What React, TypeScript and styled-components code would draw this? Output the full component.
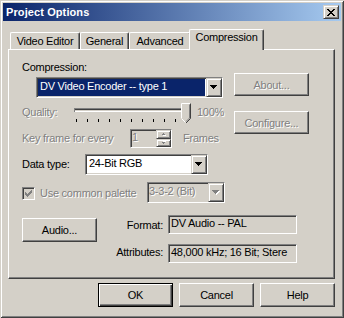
import React from 'react';
import styled, { createGlobalStyle, css } from 'styled-components';

const FACE = '#D4D0C8';
const SHADOW = '#808080';
const DARK = '#404040';
const SEL = '#0A246A';

const GlobalStyle = createGlobalStyle`
    html, body {
        margin: 0;
        padding: 0;
        background: ${FACE};
    }
    body {
        font-family: "Liberation Sans", Arial, sans-serif;
        font-size: 11px;
        letter-spacing: -0.25px;
        color: #000;
    }
    * {
        box-sizing: border-box;
    }
`;

const raised = css`
    border: 1px solid;
    border-color: #fff ${DARK} ${DARK} #fff;
    box-shadow: inset -1px -1px ${SHADOW};
`;

const raisedSmall = css`
    border: 1px solid;
    border-color: ${FACE} ${DARK} ${DARK} ${FACE};
    box-shadow: inset 1px 1px #fff, inset -1px -1px ${SHADOW};
`;

const sunken = css`
    border: 1px solid;
    border-color: ${SHADOW} #fff #fff ${SHADOW};
    box-shadow: inset 1px 1px ${DARK}, inset -1px -1px ${FACE};
`;

const greyed = css`
    color: ${SHADOW};
    text-shadow: 1px 1px 0 #fff;
`;

const Window = styled.div`
    width: 344px;
    height: 318px;
    padding: 3px;
    background: ${FACE};
    box-shadow: inset 1px 1px ${FACE}, inset -1px -1px ${DARK}, inset 2px 2px #fff, inset -2px -2px ${SHADOW};
    display: flex;
    flex-direction: column;
`;

const TitleBar = styled.div`
    height: 18px;
    display: flex;
    align-items: center;
    justify-content: space-between;
    padding: 0 2px 0 3px;
    background: linear-gradient(to right, ${SEL}, #a6caf0);
`;

const TitleText = styled.span`
    color: #fff;
    font-weight: bold;
    letter-spacing: 0.1px;
    line-height: 13px;
`;

const CaptionButton = styled.div`
    width: 16px;
    height: 14px;
    background: ${FACE};
    ${raisedSmall};
    display: flex;
    align-items: center;
    justify-content: center;
`;

const Body = styled.div`
    flex: 1;
    padding: 8px 0 0 5px;
`;

const TabStrip = styled.div`
    height: 20px;
    display: flex;
    align-items: flex-end;
    padding-left: 2px;
`;

const Tab = styled.div<{ $active?: boolean; $w: number }>`
    position: relative;
    z-index: ${(p) => (p.$active ? 2 : 1)};
    width: ${(p) => p.$w}px;
    height: ${(p) => (p.$active ? 21 : 17)}px;
    margin: ${(p) => (p.$active ? '0 -2px -1px -2px' : '0')};
    padding-top: ${(p) => (p.$active ? 1 : 2)}px;
    background: ${FACE};
    border-top: 1px solid #fff;
    border-left: 1px solid #fff;
    border-right: 1px solid ${DARK};
    border-radius: 2px 2px 0 0;
    box-shadow: inset -1px 0 ${SHADOW};
    text-align: center;
    line-height: 13px;
    white-space: nowrap;
`;

const Panel = styled.div`
    width: 327px;
    height: 230px;
    padding: 11px 0 0 13px;
    border: 1px solid;
    border-color: #fff ${DARK} ${DARK} #fff;
    box-shadow: inset -1px -1px ${SHADOW};
`;

const TopGrid = styled.div`
    display: grid;
    grid-template-columns: 212px 75px;
`;

const Column = styled.div`
    display: flex;
    flex-direction: column;
    align-items: flex-start;
`;

const Row = styled.div<{ $mt: number; $h: number }>`
    display: flex;
    align-items: flex-start;
    margin-top: ${(p) => p.$mt}px;
    height: ${(p) => p.$h}px;
`;

const Label = styled.div<{ $w?: number; $pt?: number; $ml?: number; $disabled?: boolean }>`
    ${(p) => p.$w && `width: ${p.$w}px; flex: none;`}
    padding-top: ${(p) => p.$pt ?? 0}px;
    margin-left: ${(p) => p.$ml ?? 0}px;
    line-height: 13px;
    white-space: nowrap;
    ${(p) => p.$disabled && greyed};
`;

const Combo = styled.div<{ $w: number; $ml?: number; $mt?: number; $disabled?: boolean }>`
    width: ${(p) => p.$w}px;
    height: 21px;
    margin-left: ${(p) => p.$ml ?? 0}px;
    margin-top: ${(p) => p.$mt ?? 0}px;
    flex: none;
    display: flex;
    background: ${(p) => (p.$disabled ? FACE : '#fff')};
    ${sunken};
`;

const ComboValue = styled.div<{ $selected?: boolean; $disabled?: boolean }>`
    flex: 1;
    margin: 1px;
    padding-left: ${(p) => (p.$disabled ? 0 : 2)}px;
    line-height: 15px;
    white-space: nowrap;
    overflow: hidden;
    ${(p) => p.$selected && `background: ${SEL}; color: #fff;`}
    ${(p) => p.$disabled && greyed};
`;

const DropButton = styled.div`
    width: 16px;
    flex: none;
    background: ${FACE};
    ${raisedSmall};
    display: flex;
    align-items: center;
    justify-content: center;
`;

const PushButton = styled.div<{ $h: number; $mt?: number; $default?: boolean; $disabled?: boolean }>`
    width: 75px;
    height: ${(p) => p.$h}px;
    margin-top: ${(p) => p.$mt ?? 0}px;
    flex: none;
    display: flex;
    align-items: center;
    justify-content: center;
    background: ${FACE};
    white-space: nowrap;
    ${(p) =>
        p.$default
            ? css`
                  border: 1px solid #000;
                  box-shadow: inset 1px 1px #fff, inset -1px -1px ${DARK}, inset -2px -2px ${SHADOW};
              `
            : raised};
    ${(p) => p.$disabled && greyed};
`;

const SpinBox = styled.div`
    width: 42px;
    height: 19px;
    flex: none;
    display: flex;
    background: ${FACE};
    ${sunken};
`;

const SpinValue = styled.div`
    flex: 1;
    padding: 1px 0 0 1px;
    line-height: 13px;
    ${greyed};
`;

const SpinButtons = styled.div`
    width: 15px;
    display: flex;
    flex-direction: column;
`;

const SpinButton = styled.div`
    flex: 1;
    background: ${FACE};
    ${raisedSmall};
    display: flex;
    align-items: center;
    justify-content: center;
`;

const CheckBox = styled.div`
    width: 13px;
    height: 13px;
    margin-top: 5px;
    flex: none;
    background: ${FACE};
    ${sunken};
    display: flex;
    align-items: center;
    justify-content: center;
`;

const BottomGrid = styled.div`
    display: grid;
    grid-template-columns: 75px 61px 129px;
    grid-template-rows: 19px 19px;
    column-gap: 5px;
    row-gap: 10px;
    margin-top: 12px;
`;

const AudioCell = styled.div`
    grid-column: 1;
    grid-row: 1 / span 2;
    padding-top: 3px;
`;

const FieldLabel = styled(Label)`
    text-align: right;
`;

const Field = styled.div`
    height: 19px;
    padding: 1px 0 0 2px;
    line-height: 13px;
    white-space: nowrap;
    overflow: hidden;
    background: ${FACE};
    ${sunken};
`;

const ButtonRow = styled.div`
    width: 327px;
    margin-top: 4px;
    display: flex;
    justify-content: flex-end;
    gap: 6px;
`;

const Arrow = ({ disabled }: { disabled?: boolean }) => (
    <svg width={8} height={5} viewBox="0 0 8 5" shapeRendering="crispEdges">
        {disabled && <path d="M1 1h7v1H1zM2 2h5v1H2zM3 3h3v1H3zM4 4h1v1H4z" fill="#fff" />}
        <path d="M0 0h7v1H0zM1 1h5v1H1zM2 2h3v1H2zM3 3h1v1H3z" fill={disabled ? SHADOW : '#000'} />
    </svg>
);

const SpinArrow = ({ down }: { down?: boolean }) => (
    <svg width={6} height={4} viewBox="0 0 6 4" shapeRendering="crispEdges">
        <g transform={down ? 'translate(0 4) scale(1 -1)' : undefined}>
            <path d="M2 1h1v1H2zM1 2h3v1H1z" fill="#fff" transform="translate(1 1)" />
            <path d="M2 0h1v1H2zM1 1h3v1H1z" fill={SHADOW} transform="translate(0 1)" />
        </g>
    </svg>
);

const CloseGlyph = () => (
    <svg width={8} height={7} viewBox="0 0 8 7" shapeRendering="crispEdges">
        <path
            d="M0 0h2v1H0zM6 0h2v1H6zM1 1h2v1H1zM5 1h2v1H5zM2 2h4v1H2zM3 3h2v1H3zM2 4h4v1H2zM1 5h2v1H1zM5 5h2v1H5zM0 6h2v1H0zM6 6h2v1H6z"
            fill="#000"
        />
    </svg>
);

const CheckMark = () => (
    <svg width={9} height={9} viewBox="0 0 9 9" shapeRendering="crispEdges">
        <path
            d="M7 1h1v1H7zM6 2h2v1H6zM1 3h1v1H1zM5 3h3v1H5zM1 4h2v1H1zM4 4h3v1H4zM1 5h5v1H1zM2 6h3v1H2zM3 7h1v1H3z"
            fill={SHADOW}
        />
    </svg>
);

const SliderSvg = styled.svg`
    flex: none;
    display: block;
`;

const Slider = () => (
    <SliderSvg width={118} height={24} viewBox="0 0 118 24">
        <g shapeRendering="crispEdges">
            <rect x={0} y={5} width={116} height={1} fill={SHADOW} />
            <rect x={1} y={6} width={114} height={1} fill={DARK} />
            <rect x={0} y={8} width={117} height={1} fill="#fff" />
            <rect x={0} y={5} width={1} height={4} fill={SHADOW} />
            <rect x={116} y={5} width={1} height={4} fill="#fff" />
            {Array.from({ length: 11 }, (_, i) => (
                <rect key={i} x={2 + i * 11} y={16} width={1} height={3} fill="#000" />
            ))}
        </g>
        <polygon points="107,0 117,0 117,15 112,20 107,15" fill={FACE} />
        <polyline points="107.5,15 107.5,0.5 116.5,0.5" fill="none" stroke="#fff" />
        <polyline points="116.5,0.5 116.5,15.5 112,20" fill="none" stroke={DARK} />
        <polyline points="115.5,1.5 115.5,15 112,18.5" fill="none" stroke={SHADOW} />
        <polyline points="107.5,15.5 111.5,19.5" fill="none" stroke="#fff" />
    </SliderSvg>
);

export default function App() {
    return (
        <>
            <GlobalStyle />
            <Window>
                <TitleBar>
                    <TitleText>Project Options</TitleText>
                    <CaptionButton>
                        <CloseGlyph />
                    </CaptionButton>
                </TitleBar>
                <Body>
                    <TabStrip>
                        <Tab $w={70}>Video Editor</Tab>
                        <Tab $w={49}>General</Tab>
                        <Tab $w={62}>Advanced</Tab>
                        <Tab $w={75} $active>
                            Compression
                        </Tab>
                    </TabStrip>
                    <Panel>
                        <TopGrid>
                            <Column>
                                <Label>Compression:</Label>
                                <Combo $w={187} $ml={14} $mt={3}>
                                    <ComboValue $selected>DV Video Encoder -- type 1</ComboValue>
                                    <DropButton>
                                        <Arrow />
                                    </DropButton>
                                </Combo>
                                <Row $mt={5} $h={24}>
                                    <Label $w={52} $pt={3} $disabled>
                                        Quality:
                                    </Label>
                                    <Slider />
                                    <Label $pt={3} $ml={5} $disabled>
                                        100%
                                    </Label>
                                </Row>
                                <Row $mt={2} $h={20}>
                                    <Label $w={108} $pt={3} $disabled>
                                        Key frame for every
                                    </Label>
                                    <SpinBox>
                                        <SpinValue>1</SpinValue>
                                        <SpinButtons>
                                            <SpinButton>
                                                <SpinArrow />
                                            </SpinButton>
                                            <SpinButton>
                                                <SpinArrow down />
                                            </SpinButton>
                                        </SpinButtons>
                                    </SpinBox>
                                    <Label $pt={3} $ml={11} $disabled>
                                        Frames
                                    </Label>
                                </Row>
                            </Column>
                            <Column>
                                <PushButton $h={23} $mt={12} $disabled>
                                    About...
                                </PushButton>
                                <PushButton $h={23} $mt={15} $disabled>
                                    Configure...
                                </PushButton>
                            </Column>
                        </TopGrid>

                        <Row $mt={5} $h={21}>
                            <Label $w={63} $pt={4}>
                                Data type:
                            </Label>
                            <Combo $w={123}>
                                <ComboValue>24-Bit RGB</ComboValue>
                                <DropButton>
                                    <Arrow />
                                </DropButton>
                            </Combo>
                        </Row>

                        <Row $mt={7} $h={21}>
                            <CheckBox>
                                <CheckMark />
                            </CheckBox>
                            <Label $w={107} $ml={5} $pt={5} $disabled>
                                Use common palette
                            </Label>
                            <Combo $w={78} $disabled>
                                <ComboValue $disabled>3-3-2 (Bit)</ComboValue>
                                <DropButton>
                                    <Arrow disabled />
                                </DropButton>
                            </Combo>
                        </Row>

                        <BottomGrid>
                            <AudioCell>
                                <PushButton $h={24}>Audio...</PushButton>
                            </AudioCell>
                            <FieldLabel $pt={4}>Format:</FieldLabel>
                            <Field>DV Audio -- PAL</Field>
                            <FieldLabel $pt={2}>Attributes:</FieldLabel>
                            <Field>48,000 kHz; 16 Bit; Stere</Field>
                        </BottomGrid>
                    </Panel>
                    <ButtonRow>
                        <PushButton $h={24} $default>
                            OK
                        </PushButton>
                        <PushButton $h={24}>Cancel</PushButton>
                        <PushButton $h={24}>Help</PushButton>
                    </ButtonRow>
                </Body>
            </Window>
        </>
    );
}
